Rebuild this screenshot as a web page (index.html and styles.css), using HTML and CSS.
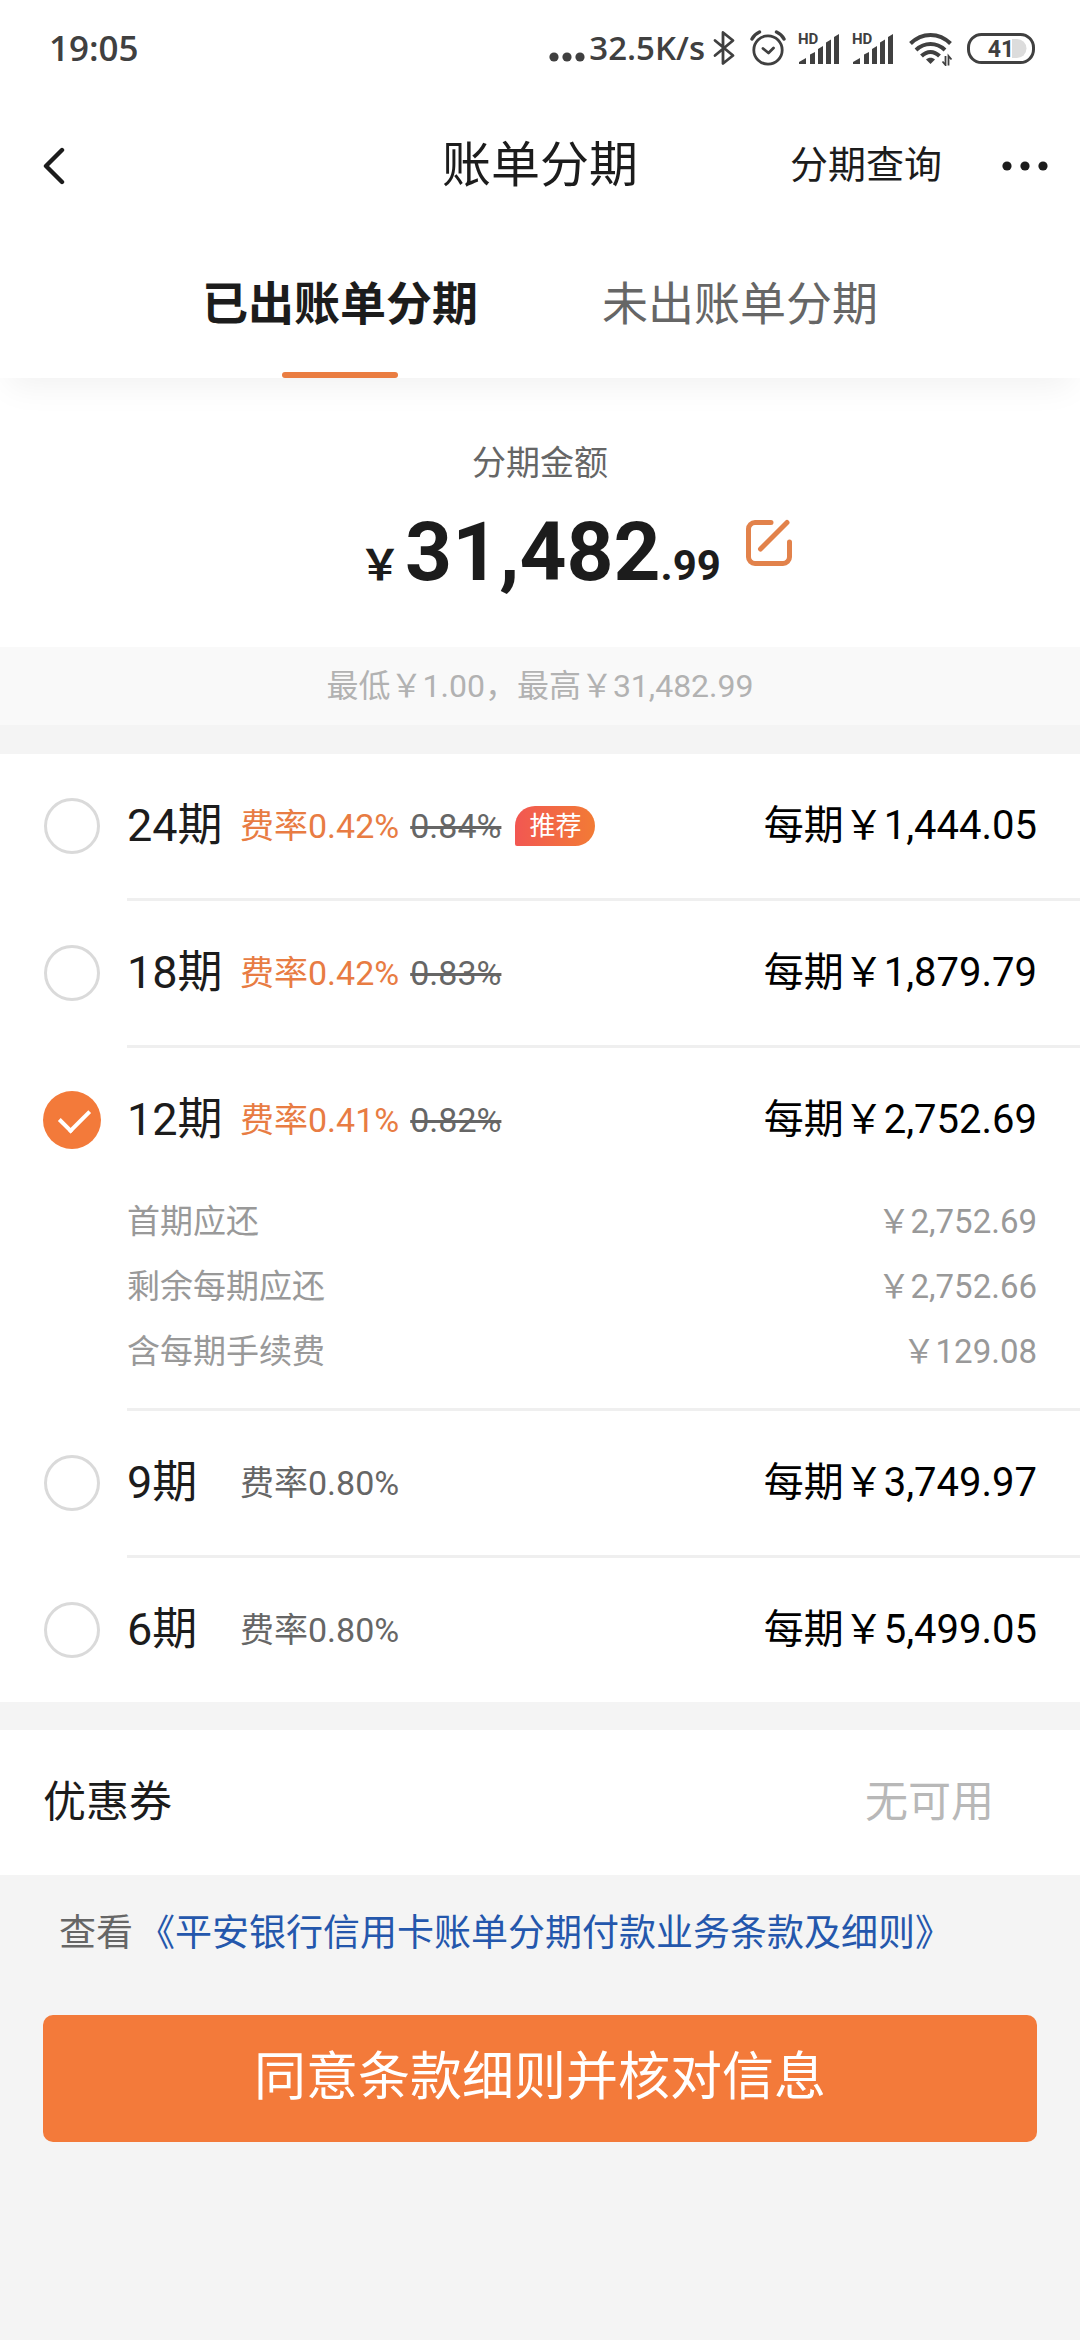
FILE: index.html
```
<!DOCTYPE html>
<html lang="zh-CN">
<head>
  <meta charset="UTF-8" />
  <meta name="viewport" content="width=device-width, initial-scale=1.0"/>
  <title>账单分期</title>
  <link rel="stylesheet" href="styles.css">
</head>
<body>

  <header class="header">
    <div class="status">
      <span class="time">19:05</span>
      <div class="status-icons">
        <svg class="dots" width="36" height="34" viewBox="0 0 36 34" fill="#404040">
          <circle cx="5" cy="26" r="4.6"/><circle cx="18" cy="26" r="4.6"/><circle cx="31" cy="26" r="4.6"/>
        </svg>
        <span class="speed">32.5K/s</span>
        <svg class="bluetooth" width="22" height="36" viewBox="0 0 22 36" fill="none" stroke="#404040" stroke-width="2.8" stroke-linejoin="round" stroke-linecap="round">
          <path d="M2 10.500 L20 25.500 L10 33.500 V2.500 L20 10.500 L2 25.500"/>
        </svg>
        <svg class="alarm" width="36" height="36" viewBox="0 0 36 36" fill="none" stroke="#404040" stroke-width="2.8" stroke-linecap="round" stroke-linejoin="round">
          <circle cx="18" cy="20" r="14.2"/>
          <path d="M13 18.500l5.500 4.500 5-5"/>
          <path d="M2 9c1.500-3 4-5.500 7.500-7M34 9c-1.500-3-4-5.500-7.500-7" stroke-width="3.400"/>
        </svg>
        <svg class="signal" width="42" height="36" viewBox="0 0 42 36" fill="#404040">
          <text x="0" y="14" class="hd">HD</text>
          <path d="M1 34v-2l7-4v6zM12 34V24.500l5-2.500v12zM20 34V19l5-3v18zM28 34V12.500l5-3V34zM36 34V7l5-3v30z"/>
        </svg>
        <svg class="signal" width="42" height="36" viewBox="0 0 42 36" fill="#404040">
          <text x="0" y="14" class="hd">HD</text>
          <path d="M1 34v-2l7-4v6zM12 34V24.500l5-2.500v12zM20 34V19l5-3v18zM28 34V12.500l5-3V34zM36 34V7l5-3v30z"/>
        </svg>
        <svg class="wifi" width="44" height="36" viewBox="0 0 44 36" fill="none" stroke="#404040" stroke-width="4">
          <path d="M1.500 13.500C13 2 30 2 41.500 13.500"/>
          <path d="M7 20C15.500 12 27.500 12 36 20"/>
          <path d="M12.500 26C18 20.500 25 20.500 30.500 26"/>
          <path d="M17 29.500c2.500-2.500 6.500-2.500 9 0L21.500 34z" fill="#404040" stroke="none"/>
          <path d="M36.500 26v9l-3-3.500M39.500 35.500V26l3 3.500" stroke-width="1.800"/>
        </svg>
        <svg class="battery" width="68" height="32" viewBox="0 0 68 32">
          <path d="M45 7h5a9.500 9.500 0 0 1 0 19h-5z" fill="#dcdcdc"/>
          <rect x="1.500" y="2.500" width="65" height="28" rx="13" fill="none" stroke="#404040" stroke-width="3"/>
          <text x="34" y="25" text-anchor="middle" class="level">41</text>
        </svg>
      </div>
    </div>

    <nav class="navbar">
      <button class="back" aria-label="返回">
        <svg width="22" height="38" viewBox="0 0 22 38" fill="none" stroke="#1c1c1c" stroke-width="4.400" stroke-linecap="round" stroke-linejoin="round">
          <path d="M19 3L3 19l16 16"/>
        </svg>
      </button>
      <h1>账单分期</h1>
      <div class="nav-right">
        <a href="#">分期查询</a>
        <button class="more" aria-label="更多">
          <svg width="46" height="12" viewBox="0 0 46 12" fill="#1c1c1c">
            <circle cx="5" cy="6" r="4.600"/><circle cx="23" cy="6" r="4.600"/><circle cx="41" cy="6" r="4.600"/>
          </svg>
        </button>
      </div>
    </nav>

    <div class="tabs">
      <button class="tab active">已出账单分期</button>
      <button class="tab">未出账单分期</button>
    </div>
  </header>

  <section class="amount">
    <p class="amount-label">分期金额</p>
    <div class="amount-row">
      <p class="amount-value"><span class="small yen">￥</span>31,482<span class="small">.99</span></p>
      <button class="edit" aria-label="修改金额">
        <svg width="48" height="48" viewBox="0 0 48 48" fill="none" stroke="#e2824b" stroke-width="5" stroke-linecap="round">
          <path d="M26 3.500H10A6.500 6.500 0 0 0 3.500 10v28a6.500 6.500 0 0 0 6.500 6.500h28a6.500 6.500 0 0 0 6.500-6.500V23"/>
          <path d="M42 3.500L15.500 30"/>
        </svg>
      </button>
    </div>
  </section>
  <p class="range">最低￥1.00，最高￥31,482.99</p>

  <ul class="plans">
    <li class="plan">
      <input type="radio" name="plan" id="p24">
      <div class="plan-body">
        <label for="p24">
          <span class="term">24期</span>
          <span class="rate sale">费率0.42%</span>
          <del>0.84%</del>
          <span class="badge">推荐</span>
          <span class="each">每期￥1,444.05</span>
        </label>
      </div>
    </li>
    <li class="plan">
      <input type="radio" name="plan" id="p18">
      <div class="plan-body">
        <label for="p18">
          <span class="term">18期</span>
          <span class="rate sale">费率0.42%</span>
          <del>0.83%</del>
          <span class="each">每期￥1,879.79</span>
        </label>
      </div>
    </li>
    <li class="plan">
      <input type="radio" name="plan" id="p12" checked>
      <div class="plan-body">
        <label for="p12">
          <span class="term">12期</span>
          <span class="rate sale">费率0.41%</span>
          <del>0.82%</del>
          <span class="each">每期￥2,752.69</span>
        </label>
        <dl class="details">
          <dt>首期应还</dt><dd>￥2,752.69</dd>
          <dt>剩余每期应还</dt><dd>￥2,752.66</dd>
          <dt>含每期手续费</dt><dd>￥129.08</dd>
        </dl>
      </div>
    </li>
    <li class="plan">
      <input type="radio" name="plan" id="p9">
      <div class="plan-body">
        <label for="p9">
          <span class="term">9期</span>
          <span class="rate">费率0.80%</span>
          <span class="each">每期￥3,749.97</span>
        </label>
      </div>
    </li>
    <li class="plan">
      <input type="radio" name="plan" id="p6">
      <div class="plan-body">
        <label for="p6">
          <span class="term">6期</span>
          <span class="rate">费率0.80%</span>
          <span class="each">每期￥5,499.05</span>
        </label>
      </div>
    </li>
  </ul>

  <div class="coupon">
    <span>优惠券</span>
    <span class="none">无可用</span>
  </div>

  <footer class="footer">
    <p class="terms">查看<a href="#">《平安银行信用卡账单分期付款业务条款及细则》</a></p>
    <button class="submit">同意条款细则并核对信息</button>
  </footer>

</body>
</html>
```
FILE: styles.css
```
* {
  box-sizing: border-box;
  margin: 0;
  padding: 0;
}
body {
  font-family: Roboto, "Noto Sans CJK SC", sans-serif;
  line-height: 1.2;
  background: #f4f4f4;
  color: #1c1c1c;
}
button {
  font-family: inherit;
  line-height: inherit;
  color: inherit;
  border: none;
  background: none;
}
a {
  color: inherit;
  text-decoration: none;
}
svg {
  display: block;
}

/* header */
.header {
  position: relative;
  background: #fff;
  box-shadow: 0 16px 32px -8px rgba(0,0,0,0.06);
}
.status {
  display: flex;
  justify-content: space-between;
  align-items: center;
  height: 96px;
  padding: 0 45px 0 49px;
  font-family: "Open Sans", sans-serif;
  font-weight: 600;
  color: #404040;
}
.time {
  font-size: 35px;
}
.status-icons {
  display: flex;
  align-items: center;
}
.speed {
  margin: 0 8px 0 4px;
  font-size: 33px;
}
.alarm {
  margin-left: 15px;
}
.signal {
  margin-left: 12px;
}
.wifi {
  margin-left: 15px;
}
.battery {
  margin-left: 14px;
}
.hd {
  font-family: Roboto, sans-serif;
  font-size: 15px;
  font-weight: 700;
}
.level {
  font-family: Roboto, sans-serif;
  font-size: 23px;
  font-weight: 700;
  fill: #404040;
}
.navbar {
  display: grid;
  grid-template-columns: 1fr auto 1fr;
  align-items: center;
  height: 136px;
  padding: 4px 32px 0;
}
.back {
  justify-self: start;
  margin-left: 11px;
}
h1 {
  font-size: 49px;
  font-weight: 400;
}
.nav-right {
  display: flex;
  justify-content: flex-end;
  align-items: center;
  gap: 60px;
  font-size: 38px;
}
.tabs {
  display: flex;
  justify-content: center;
  gap: 124px;
  height: 146px;
}
.tab {
  position: relative;
  font-size: 46px;
  color: #666;
}
.tab.active {
  font-weight: 700;
  color: #1c1c1c;
}
.tab.active::after {
  content: "";
  position: absolute;
  left: 50%;
  bottom: 0;
  width: 116px;
  height: 6px;
  margin-left: -58px;
  border-radius: 3px;
  background: #ea7d41;
}

/* amount */
.amount {
  padding: 61px 0 47px;
  background: #fff;
  text-align: center;
}
.amount-label {
  line-height: 48px;
  font-size: 34px;
  color: #666;
}
.amount-row {
  display: grid;
  grid-template-columns: 1fr auto 1fr;
  margin-top: 17px;
}
.amount-value {
  grid-column: 2;
  line-height: 96px;
  font-size: 82px;
  font-weight: 700;
}
.small {
  line-height: 1;
  font-size: 42px;
}
.yen {
  margin-right: 4px;
}
.edit {
  justify-self: start;
  align-self: start;
  margin: 15px 0 0 24px;
}
.range {
  line-height: 78px;
  background: #f9f9f9;
  font-size: 32px;
  color: #b2b2b2;
  text-align: center;
}

/* plans */
.plans {
  margin: 29px 0 28px;
  background: #fff;
  list-style: none;
}
.plan {
  display: flex;
}
.plan input {
  appearance: none;
  position: relative;
  flex: none;
  width: 56px;
  height: 56px;
  margin: 44px 27px 44px 44px;
  border: 3px solid #dadada;
  border-radius: 50%;
}
.plan input:checked {
  width: 58px;
  height: 58px;
  margin: 43px 26px 43px 43px;
  border: none;
  background: #f37a3a;
}
.plan input:checked::after {
  content: "";
  position: absolute;
  left: 17px;
  top: 17px;
  width: 25px;
  height: 14px;
  border: solid #fff;
  border-width: 0 0 4px 4px;
  transform: rotate(-45deg);
}
.plan-body {
  flex: 1;
  border-bottom: 3px solid #efefef;
}
.plan:last-child .plan-body {
  border-bottom: none;
}
.plan label {
  display: flex;
  align-items: center;
  height: 144px;
  padding-right: 43px;
}
.term {
  width: 113px;
  font-size: 45px;
}
.rate, del {
  font-size: 34px;
  color: #666;
}
.sale {
  color: #e87c43;
}
del {
  margin-left: 11px;
}
.badge {
  margin-left: 14px;
  padding: 0 14px;
  line-height: 40px;
  border-radius: 20px 20px 20px 2px;
  background: linear-gradient(90deg, #f25752, #f27b35);
  font-size: 26px;
  color: #fff;
}
.each {
  margin-left: auto;
  font-size: 40px;
  color: #000;
}
.details {
  display: grid;
  grid-template-columns: auto auto;
  justify-content: space-between;
  row-gap: 17px;
  padding: 6px 43px 32px 0;
  line-height: 48px;
  font-size: 33px;
  color: #999;
}
.details dd {
  text-align: right;
}

/* coupon */
.coupon {
  display: flex;
  justify-content: space-between;
  align-items: center;
  height: 145px;
  padding: 0 86px 0 43px;
  background: #fff;
  font-size: 43px;
}
.none {
  color: #b8b8b8;
}

/* footer */
.footer {
  padding: 31px 43px;
}
.terms {
  padding-left: 16px;
  line-height: 56px;
  font-size: 37px;
  color: #666;
}
.terms a {
  margin-left: 5px;
  color: #2457ac;
}
.submit {
  display: block;
  width: 100%;
  height: 127px;
  margin-top: 53px;
  border-radius: 10px;
  background: #f37a3a;
  font-size: 52px;
  color: #fff;
}
```
